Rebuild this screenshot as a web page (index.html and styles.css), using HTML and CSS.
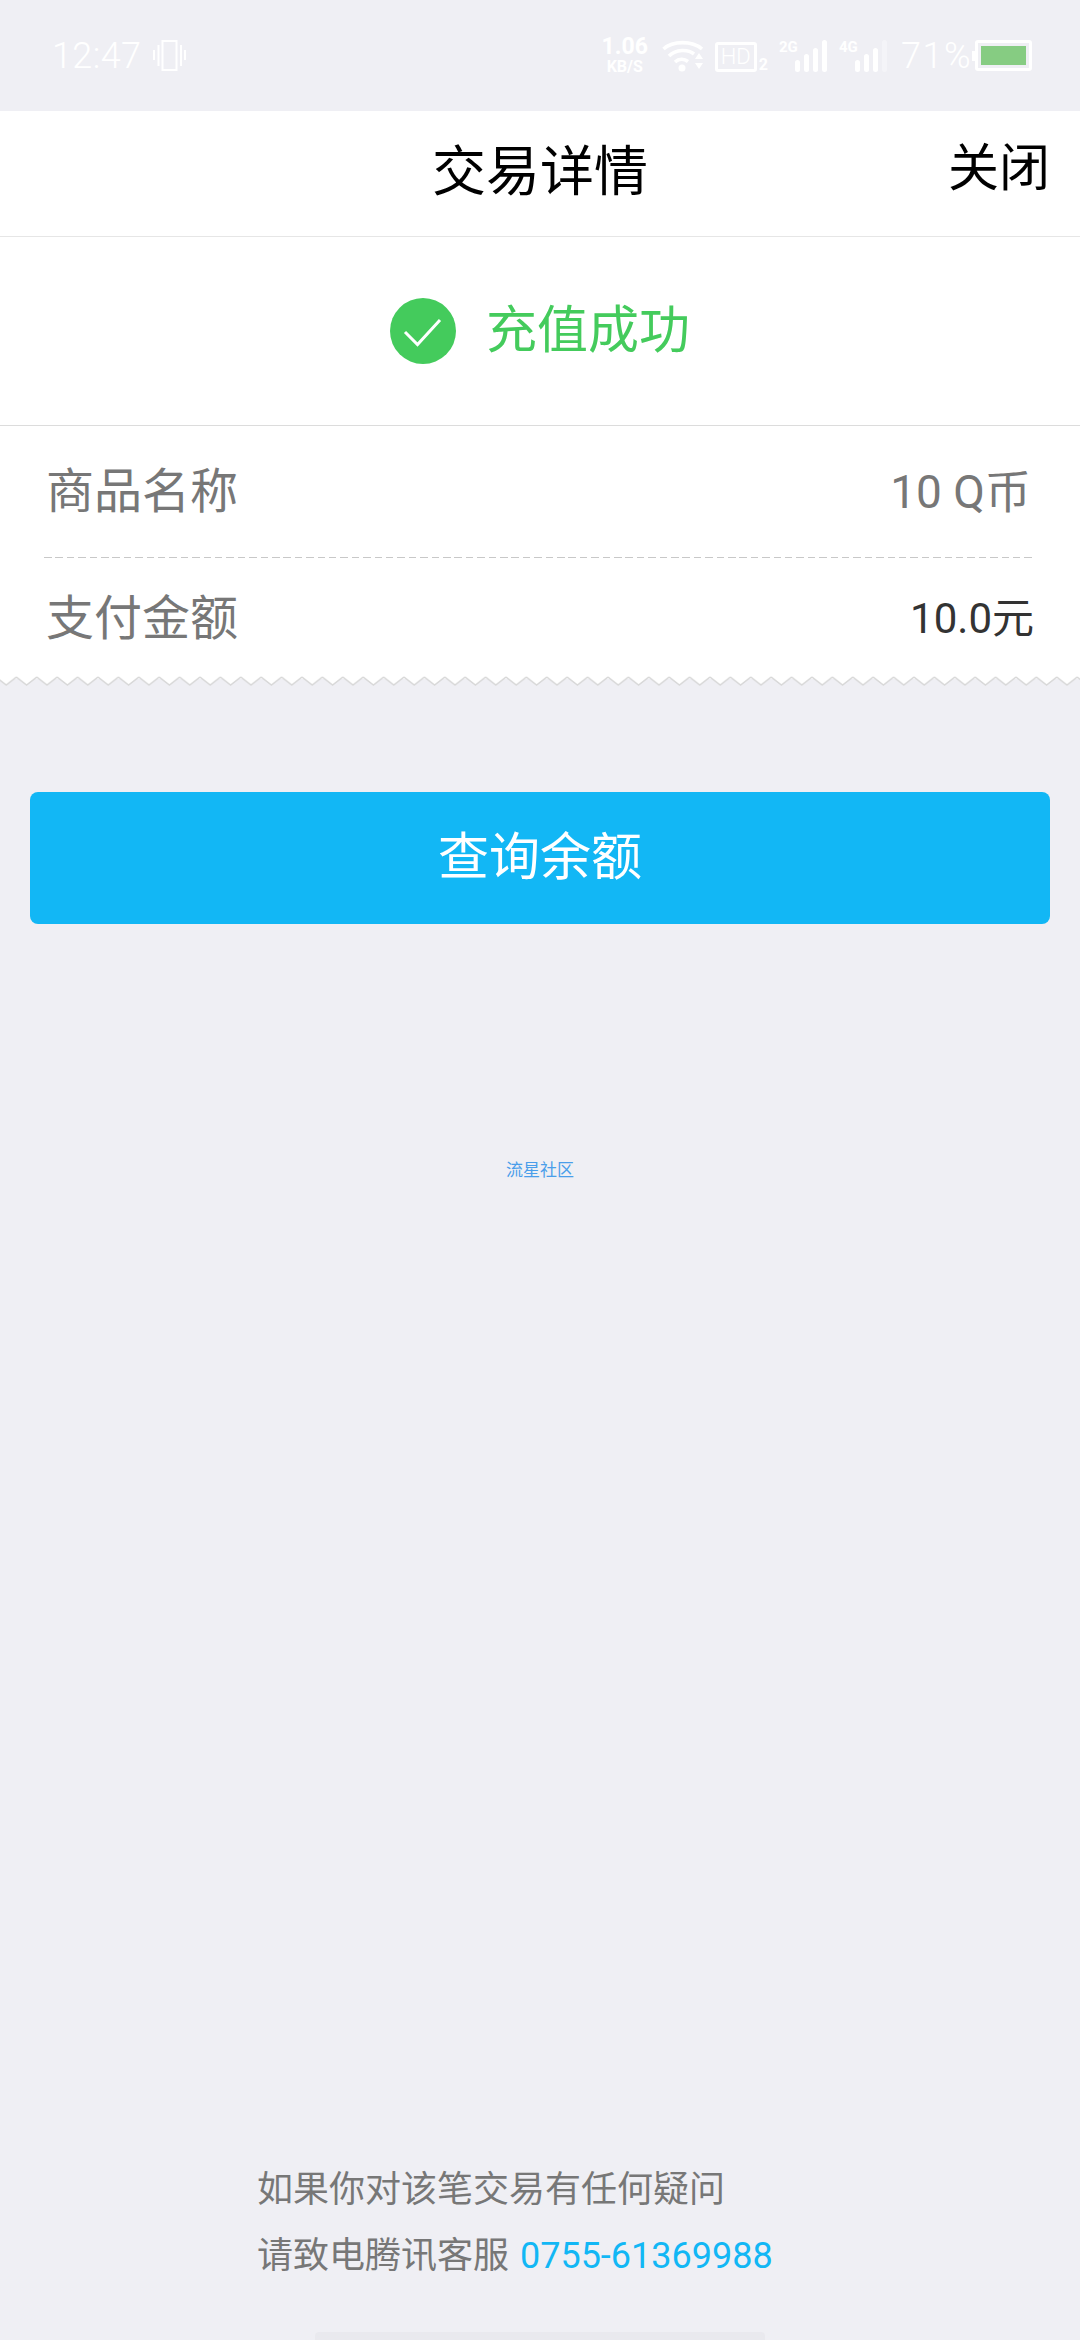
FILE: index.html
```html
<!DOCTYPE html>
<html lang="zh-CN">
<head>
<meta charset="utf-8">
<title>交易详情</title>
<link rel="stylesheet" href="styles.css">
</head>
<body>
<div class="page">
  <header class="status">
    <div class="status-left">
      <span class="time">12:47</span>
      <svg class="vib" width="33" height="32" viewBox="0 0 33 32" fill="none" stroke="#fff" stroke-width="2"><rect x="9.5" y="1" width="14" height="29"/><path d="M5.500 5v21M28 5v21" /><path d="M1 10v10M32 10v10" /></svg>
    </div>
    <div class="status-right">
      <div class="speed"><span class="speed-num">1.06</span><span class="speed-unit">KB/S</span></div>
      <svg class="wifi" width="42" height="34" viewBox="0 0 42 34" fill="none" stroke="#fff" stroke-width="3.600"><path d="M1.500 10C11 1.500 30 1.500 40 10"/><path d="M7 17C14 10 26 10 32 15"/><path d="M13 23c4-3.500 9-3.500 13-.5"/><circle cx="20" cy="29" r="3.500" fill="#fff" stroke="none"/><path d="M33 20l4-6 4 6zM33 24h8l-4 6z" fill="#fff" stroke="none"/></svg>
      <div class="hd"><span class="hd-box">HD</span><span class="hd-sub">2</span></div>
      <div class="sig"><span class="sig-label">2G</span><svg width="33" height="32" viewBox="0 0 33 32" fill="#fff"><rect x="0" y="20" width="5" height="12" rx="2.500"/><rect x="9" y="14" width="5" height="18" rx="2.500"/><rect x="18" y="8" width="5" height="24" rx="2.500"/><rect x="27" y="0" width="5" height="32" rx="2.500"/></svg></div>
      <div class="sig sig-b"><span class="sig-label">4G</span><svg width="33" height="32" viewBox="0 0 33 32" fill="#fff"><rect x="0" y="20" width="5" height="12" rx="2.500"/><rect x="9" y="14" width="5" height="18" rx="2.500"/><rect x="18" y="8" width="5" height="24" rx="2.500"/><rect x="27" y="0" width="5" height="32" rx="2.500" opacity=".35"/></svg></div>
      <span class="pct">71%</span>
      <div class="batt"><span class="batt-nub"></span><span class="batt-body"><span class="batt-fill"></span></span></div>
    </div>
  </header>

  <nav class="nav">
    <span class="nav-title">交易详情</span>
    <span class="nav-close">关闭</span>
  </nav>

  <section class="result">
    <svg class="ok" width="66" height="66" viewBox="0 0 66 66"><circle cx="33" cy="33" r="33" fill="#44cb5c"/><path d="M15 34l12.500 12.500L50 22" fill="none" stroke="#fff" stroke-width="3"/></svg>
    <span class="result-text">充值成功</span>
  </section>

  <section class="details">
    <div class="row row-a">
      <span class="label">商品名称</span>
      <span class="value">10 Q币</span>
    </div>
    <div class="dash"></div>
    <div class="row row-b">
      <span class="label">支付金额</span>
      <span class="value value-dark">10.0元</span>
    </div>
  </section>
  <svg class="zigzag" width="1080" height="12" viewBox="0 0 1080 12">
    <defs><pattern id="zz" width="20.400" height="12" patternUnits="userSpaceOnUse" x="-4"><path d="M0 2l10.200 8L20.400 2V0H0z" fill="#fff"/><path d="M0 2l10.200 8L20.400 2" fill="none" stroke="#d8d8d8" stroke-width="1.500"/></pattern></defs>
    <rect width="1080" height="12" fill="url(#zz)"/>
  </svg>

  <button class="btn">查询余额</button>
  <div class="community">流星社区</div>

  <footer class="foot">
    <div class="foot-inner">
      <div class="foot-line">如果你对该笔交易有任何疑问</div>
      <div class="foot-line">请致电腾讯客服 <span class="phone">0755-61369988</span></div>
    </div>
    <div class="home-bar"></div>
  </footer>
</div>
</body>
</html>
```
FILE: styles.css
```css
* { box-sizing: border-box; }
html, body { margin: 0; padding: 0; }
body {
  background: #efeff4;
  font-family: Roboto, "Noto Sans CJK SC", sans-serif;
}
.page {
  width: 1080px;
  height: 2340px;
  display: flex;
  flex-direction: column;
  overflow: hidden;
}
.status {
  height: 111px;
  flex: none;
  display: flex;
  justify-content: space-between;
  align-items: center;
  padding: 0 48px 0 52px;
  color: #fff;
}
.status-left { display: flex; align-items: center; gap: 12px; }
.time { font-size: 36px; line-height: 42px; font-weight: 300; letter-spacing: .4px; }
.vib { display: block; }
.status-right { display: flex; align-items: center; }
.speed { display: flex; flex-direction: column; align-items: center; width: 48px; font-weight: 700; }
.speed-num { font-size: 23px; line-height: 22px; }
.speed-unit { font-size: 16px; line-height: 18px; }
.wifi { margin-left: 13px; margin-top: 0; display: block; }
.hd { display: flex; align-items: flex-end; margin-left: 11px; height: 32px; }
.hd-box { width: 42px; height: 30px; border: 3px solid #fff; border-radius: 3px; font-size: 22px; line-height: 24px; text-align: center; font-weight: 300; }
.hd-sub { font-size: 16px; line-height: 16px; font-weight: 700; margin-left: 2px; margin-bottom: -1px; }
.sig { position: relative; margin-left: 27px; width: 33px; display: flex; }
.sig svg { display: block; }
.sig-b { margin-left: 27px; }
.sig-label { position: absolute; left: -16px; top: -1px; font-size: 15px; line-height: 16px; font-weight: 700; }
.pct { font-size: 36px; line-height: 42px; font-weight: 300; margin-left: 13px; letter-spacing: 1.500px; }
.batt { display: flex; align-items: center; margin-left: 0; }
.batt-nub { width: 3px; height: 10px; background: #fff; }
.batt-body { width: 57px; height: 31px; border: 3px solid #fff; border-radius: 3px; padding: 3px; display: block; }
.batt-fill { display: block; width: 100%; height: 100%; background: #86cc82; }

.nav {
  height: 126px;
  flex: none;
  background: #fff;
  border-bottom: 1px solid #e6e6e6;
  position: relative;
  display: flex;
  align-items: center;
  justify-content: center;
  color: #000;
}
.nav-title { font-size: 54px; line-height: 74px; margin-top: -2px; }
.nav-close { position: absolute; right: 30px; top: 21px; font-size: 51px; line-height: 74px; }

.result {
  height: 189px;
  flex: none;
  background: #fff;
  border-bottom: 1px solid #dcdcdc;
  display: flex;
  align-items: center;
  justify-content: center;
  gap: 30px;
  padding-right: 0;
}
.ok { display: block; }
.result-text { font-size: 51px; line-height: 70px; color: #44cb5c; }

.details { background: #fff; flex: none; padding: 0 46px 0 44px; height: 253px; }
.row { display: flex; justify-content: space-between; align-items: center; padding-left: 2px; }
.row-a { height: 131px; }
.row-b { height: 121px; }
.label { font-size: 48px; line-height: 66px; color: #777; }
.value { font-size: 46px; line-height: 66px; color: #777; padding-right: 3px; }
.value-dark { font-size: 42px; color: #333; padding-right: 0; }
.dash { height: 1px; background: repeating-linear-gradient(90deg, #c8c8c8 0 7.500px, transparent 7.500px 11.400px); }

.zigzag { display: block; flex: none; margin-top: -4px; }

.btn {
  display: block;
  flex: none;
  width: 1020px;
  height: 132px;
  margin: 105px 30px 0;
  border: 0;
  border-radius: 8px;
  background: #12b7f5;
  color: #fff;
  font: 400 51px/70px Roboto, "Noto Sans CJK SC", sans-serif;
}
.community {
  margin-top: 234px;
  flex: none;
  text-align: center;
  font-size: 17px;
  line-height: 24px;
  color: #4a9eea;
}
.foot { margin-top: auto; flex: none; display: flex; flex-direction: column; }
.foot-inner { padding-left: 257px; }
.foot-line { font-size: 36px; line-height: 66px; color: #777; white-space: nowrap; }
.phone { font-size: 36px; color: #12b7f5; margin-left: 2px; }
.home-bar { width: 450px; height: 8px; margin: 43px auto 0; background: #e9e9ee; border-radius: 4px 4px 0 0; }
```
